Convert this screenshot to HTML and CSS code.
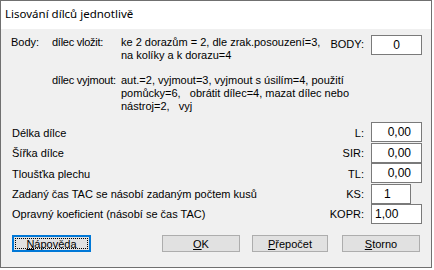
FILE: index.html
```html
<!DOCTYPE html>
<html lang="cs">
<head>
  <meta charset="UTF-8" />
  <title>Lisování dílců jednotlivě</title>
  <link rel="stylesheet" href="styles.css">
</head>
<body>

<div class="window">
  <div class="titlebar">Lisování dílců jednotlivě</div>

  <div class="client">
    <div class="points">
      <div class="prow">
        <span class="c1">Body:</span>
        <span class="c2">dílec vložit:</span>
        <div class="c3">
          <div class="line">ke 2 dorazům = 2, dle zrak.posouzení=3,</div>
          <div class="line">na kolíky a k dorazu=4</div>
        </div>
        <span class="blabel">BODY:</span>
        <span class="box center">0</span>
      </div>
      <div class="prow second">
        <span class="c1"></span>
        <span class="c2">dílec vyjmout:</span>
        <div class="c3">
          <div class="line">aut.=2, vyjmout=3, vyjmout s úsilím=4, použití</div>
          <div class="line">pomůcky=6,   obrátit dílec=4, mazat dílec nebo</div>
          <div class="line">nástroj=2,   vyj</div>
        </div>
      </div>
    </div>

    <div class="fields">
      <span class="flabel">Délka dílce</span>
      <span class="fkey">L:</span>
      <span class="box right">0,00</span>

      <span class="flabel">Šířka dílce</span>
      <span class="fkey">SIR:</span>
      <span class="box right">0,00</span>

      <span class="flabel">Tloušťka plechu</span>
      <span class="fkey">TL:</span>
      <span class="box right">0,00</span>

      <span class="flabel">Zadaný čas TAC se násobí zadaným počtem kusů</span>
      <span class="fkey">KS:</span>
      <span class="box left narrow">1</span>

      <span class="flabel">Opravný koeficient (násobí se čas TAC)</span>
      <span class="fkey">KOPR:</span>
      <span class="box left">1,00</span>
    </div>

    <div class="buttons">
      <button class="btn help focused"><u>N</u>ápověda</button>
      <button class="btn ok"><u>O</u>K</button>
      <button class="btn recalc"><u>P</u>řepočet</button>
      <button class="btn cancel"><u>S</u>torno</button>
    </div>
  </div>
</div>

</body>
</html>
```

FILE: styles.css
```css
* { margin: 0; padding: 0; box-sizing: border-box; }

html, body {
  background: #ffffff;
  font-family: 'Liberation Sans', Arial, sans-serif;
  font-size: 11px;
  color: #000;
}

.window {
  width: 432px;
  height: 268px;
  border: 1px solid #707070;
  background: #f0f0f0;
  display: flex;
  flex-direction: column;
}

.titlebar {
  height: 28px;
  background: #ffffff;
  padding: 5px 0 0 4px;
  font-family: 'Noto Sans', 'Open Sans', sans-serif;
  font-size: 11.5px;
  line-height: 16px;
}

.client {
  padding: 6px 9px 0 10px;
}

/* top block with the point values */
.prow {
  display: flex;
  align-items: flex-start;
  line-height: 13px;
}

.prow.second { margin-top: 12px; }

.prow .c1 { width: 41px; padding-top: 1px; }
.prow .c2 { width: 69px; padding-top: 1px; white-space: nowrap; letter-spacing: -0.25px; }
.prow .c3 { flex: 1; padding-top: 1px; }
.prow.second .c1,
.prow.second .c2,
.prow.second .c3 { padding-top: 0; }

.line { white-space: pre; }

.blabel {
  padding-top: 3px;
  margin-right: 7px;
}

.box {
  display: block;
  width: 51px;
  height: 20px;
  background: #ffffff;
  border: 1px solid #7a7a7a;
  line-height: 18px;
  font-size: 12px;
}

.box.center { text-align: center; }
.box.right { text-align: right; padding-right: 10px; }
.box.left { text-align: left; padding-left: 3px; }
.box.narrow { width: 40px; padding-left: 12px; }

/* lower fields */
.fields {
  margin-top: 9px;
  display: grid;
  grid-template-columns: 1fr auto 51px;
  grid-template-rows: 21px 20px 21px 20px 20px;
  column-gap: 7px;
}

.flabel { align-self: center; padding-left: 1px; }
.fkey { align-self: center; text-align: right; }
.fields .box { align-self: start; }

/* button row */
.buttons {
  display: flex;
  margin-top: 11px;
}

.btn {
  height: 17px;
  background: #e1e1e1;
  border: 1px solid #adadad;
  font-family: 'Liberation Sans', Arial, sans-serif;
  font-size: 11px;
  color: #000;
}

.btn.help { width: 79px; margin-left: 1px; }
.btn.ok { width: 78px; margin-left: auto; }
.btn.recalc { width: 76px; margin-left: 12px; }
.btn.cancel { width: 78px; margin-left: 14px; margin-right: 2px; }

.btn.focused {
  border: 1px solid #0078d7;
  box-shadow: inset 0 0 0 1px #0078d7;
  outline: 1px dotted #000;
  outline-offset: -4px;
}
```
